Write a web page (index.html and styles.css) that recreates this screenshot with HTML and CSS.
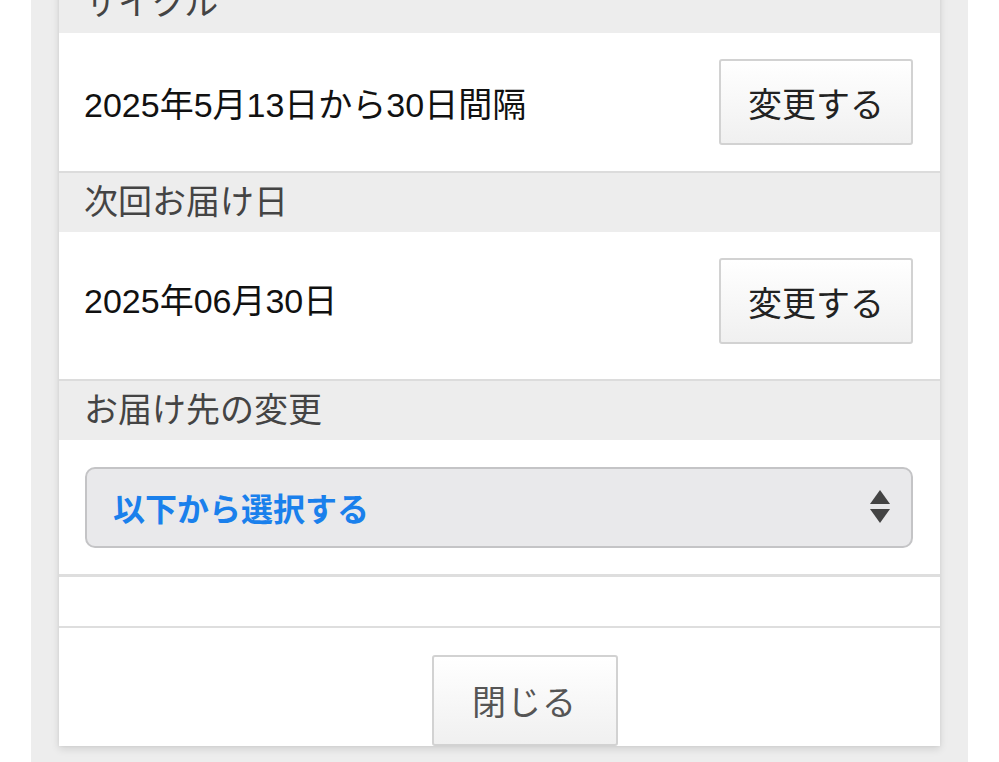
FILE: index.html
```html
<!DOCTYPE html>
<html lang="ja">
<head>
<meta charset="utf-8">
<title>定期便の変更</title>
<link rel="stylesheet" href="styles.css">
</head>
<body>
<div class="backdrop">
  <div class="panel">
    <div class="section-head first">サイクル</div>
    <div class="row row-cycle">
      <span class="row-text">2025年5月13日から30日間隔</span>
      <button class="btn-change" type="button">変更する</button>
    </div>
    <div class="section-head">次回お届け日</div>
    <div class="row row-next">
      <span class="row-text">2025年06月30日</span>
      <button class="btn-change" type="button">変更する</button>
    </div>
    <div class="section-head">お届け先の変更</div>
    <div class="row row-select">
      <div class="select-box">
        <span class="select-text">以下から選択する</span>
        <svg class="select-arrows" width="22" height="36" viewBox="0 0 22 36" aria-hidden="true">
          <path d="M11 1 L21 15 L1 15 Z" fill="#444"/>
          <path d="M1 20 L21 20 L11 34 Z" fill="#444"/>
        </svg>
      </div>
    </div>
    <div class="row-empty"></div>
    <div class="footer">
      <button class="btn-close" type="button">閉じる</button>
    </div>
  </div>
</div>
</body>
</html>
```

FILE: styles.css
```css
* {
  box-sizing: border-box;
}

html, body {
  margin: 0;
  padding: 0;
  background: #ffffff;
  height: 762px;
  overflow: hidden;
}

body {
  font-family: "Liberation Sans", "Noto Sans CJK JP", sans-serif;
  color: #111;
}

.backdrop {
  display: flow-root;
  margin: 0 31px;
  background: #ededed;
  height: 762px;
  padding: 0 28px;
}

.panel {
  margin-top: -26px;
  background: #ffffff;
  box-shadow: 0 3px 8px rgba(0, 0, 0, 0.12), 0 0 3px rgba(0, 0, 0, 0.06);
}

.section-head {
  height: 61px;
  background: #ededed;
  color: #444;
  font-size: 34px;
  line-height: 59px;
  padding-left: 25px;
  border-top: 2px solid #dcdcdc;
}

.section-head.first {
  height: 59px;
  border-top: none;
}

.row {
  display: flex;
  align-items: center;
  justify-content: space-between;
  padding: 0 27px 0 25px;
}

.row-cycle {
  height: 138px;
}

.row-next {
  height: 147px;
  padding-top: 26px;
  padding-bottom: 35px;
  align-items: flex-start;
}

.row-next .row-text {
  line-height: 86px;
}

.row-text {
  font-size: 34px;
  color: #111;
}

.btn-change {
  width: 194px;
  height: 86px;
  border: 2px solid #d2d2d2;
  border-radius: 3px;
  background: linear-gradient(#ffffff, #f0f0f0);
  font-family: inherit;
  font-size: 34px;
  color: #222;
  padding: 0;
}

.row-select {
  height: 134px;
  padding-left: 26px;
  padding-right: 27px;
}

.select-box {
  flex: 1;
  height: 81px;
  border: 2px solid #c4c4c6;
  border-radius: 10px;
  background: #e9e9eb;
  display: flex;
  align-items: center;
  justify-content: space-between;
  padding: 0 20px 0 26px;
}

.select-text {
  color: #1a80ec;
  font-weight: bold;
  font-size: 32px;
}

.select-arrows {
  display: block;
}

.row-empty {
  height: 54px;
  border-top: 3px solid #dedede;
  border-bottom: 2px solid #dedede;
}

.footer {
  display: flex;
  justify-content: center;
  padding-top: 27px;
  height: 118px;
}

.btn-close {
  width: 186px;
  height: 91px;
  border: 2px solid #d2d2d2;
  border-radius: 3px;
  background: linear-gradient(#ffffff, #f0f0f0);
  font-family: inherit;
  font-size: 34px;
  color: #555;
  padding: 0;
  letter-spacing: 1px;
  margin-left: 50px;
}
```
